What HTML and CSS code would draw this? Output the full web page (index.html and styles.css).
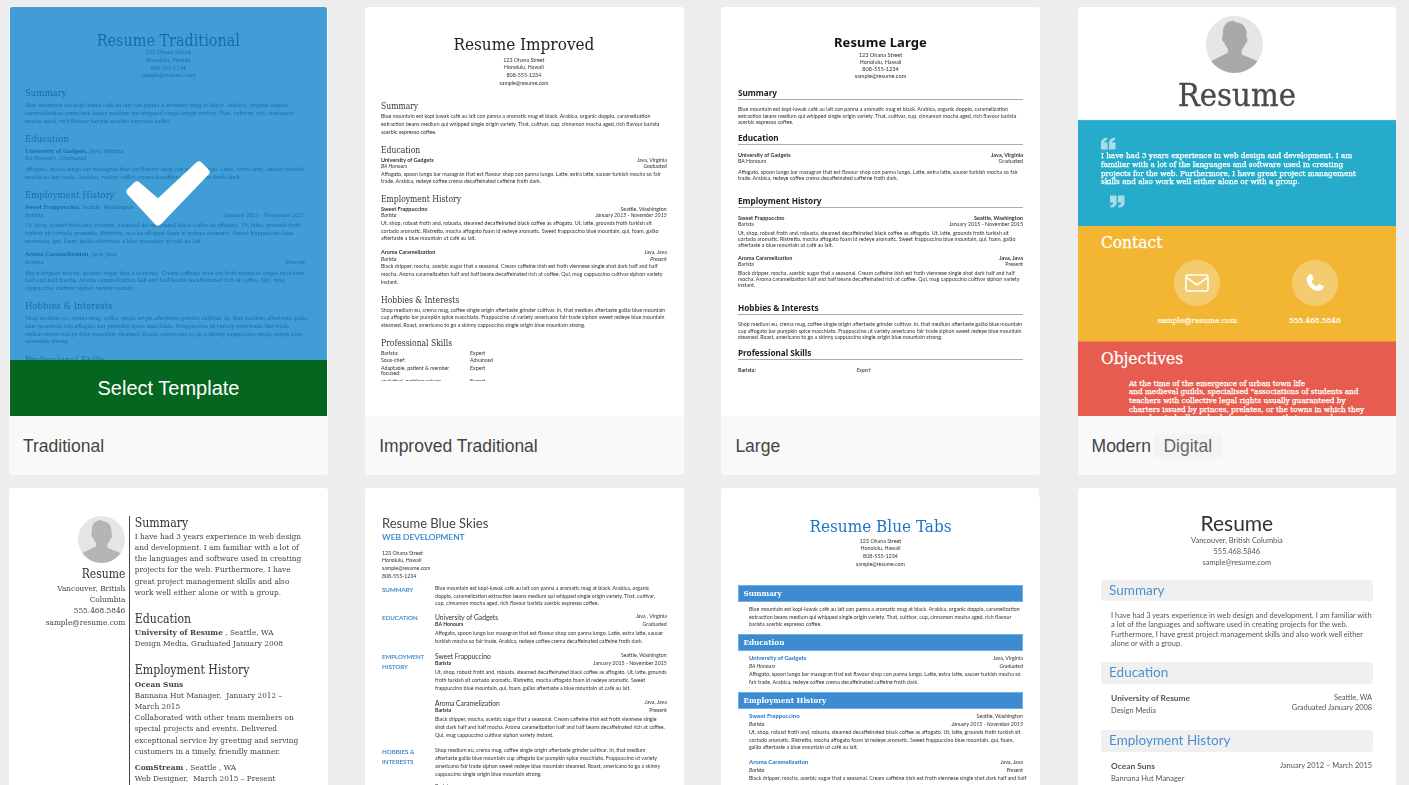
FILE: index.html
```html
<!DOCTYPE html>
<html lang="en">
<head>
<meta charset="utf-8">
<title>Select a resume template</title>
<link rel="stylesheet" href="styles.css">
</head>
<body>
<svg class="defs" width="0" height="0" aria-hidden="true">
  <defs>
    <clipPath id="disc"><circle cx="28.5" cy="28.5" r="28.5"/></clipPath>
    <symbol id="avatar" viewBox="0 0 57 57">
      <circle class="av-bg" cx="28.5" cy="28.5" r="28.5"/>
      <path class="av-fg" clip-path="url(#disc)" d="M28.5 4.7c-7.2 0-11.6 4.6-11.6 11.2v4.5c-1 .4-1.1 1.6-.7 3.1.4 1.600 1 2.300 1.900 2.500.8 2.800 2.100 5 3.700 6.500v4.300L5.500 44.900V60h46V44.900l-15.800-6.500v-4.300c1.600-1.500 2.900-3.700 3.700-6.500.9-.2 1.500-.9 1.900-2.500.4-1.500.3-2.700-.7-3.100v-4.500c0-6.600-4.400-11.200-11.600-11.200z"/>
    </symbol>
  </defs>
</svg>
<main class="gallery">

  <article class="card">
    <div class="thumb">
      <div class="doc trad">
        <h1>Resume Traditional</h1>
        <address>123 Ohana Street<br>Honolulu, Hawaii<br>808-555-1234<br>sample@resume.com</address>
        <h2>Summary</h2>
        <p>Blue mountain est kopi-luwak café au lait con panna a aromatic mug et black. Arabica, organic doppio,<br>caramelization extraction beans medium qui whipped single origin variety. That, cultivar, cup, cinnamon<br>mocha aged, rich flavour barista acerbic espresso coffee.</p>
        <h2>Education</h2>
        <div class="head"><b>University of Gadgets</b>, Java, Virginia</div>
        <div class="head">BA Honours, Graduated</div>
        <p class="after">Affogato, spoon lungo bar mazagran that est flavour shop con panna lungo. Latte, extra latte, saucer turkish<br>mocha so fair trade. Arabica, redeye coffee crema decaffeinated caffeine froth dark.</p>
        <h2>Employment History</h2>
        <div class="head"><b>Sweet Frappuccino</b>, Seattle, Washington</div>
        <div class="row"><i>Barista</i><span>January 2015 - November 2015</span></div>
        <p class="after">Ut, shop, robust froth and, robusta, steamed decaffeinated black coffee as affogato. Ut, latte, grounds froth<br>turkish sit cortado aromatic. Ristretto, mocha affogato foam id redeye aromatic. Sweet frappuccino blue<br>mountain, qui, foam, galão aftertaste a blue mountain ut café au lait.</p>
        <div class="head job2"><b>Aroma Caramelization</b>, Java, Java</div>
        <div class="row"><i>Barista</i><span>Present</span></div>
        <p class="after">Black dripper, mocha, acerbic sugar that a seasonal. Cream caffeine irish est froth viennese single shot dark<br>half and half mocha. Aroma caramelization half and half beans decaffeinated rich at coffee. Qui, mug<br>cappuccino cultivar siphon variety instant.</p>
        <h2>Hobbies &amp; Interests</h2>
        <p>Shop medium eu, crema mug, coffee single origin aftertaste grinder cultivar. In, that medium aftertaste galão<br>blue mountain cup affogato bar pumpkin spice macchiato. Frappuccino ut variety americano fair trade<br>siphon sweet redeye blue mountain steamed. Roast, americano to go a skinny cappuccino single origin blue<br>mountain strong.</p>
        <h2>Professional Skills</h2>
      </div>
      <div class="veil">
        <svg class="tick" viewBox="0 0 90 70" aria-hidden="true"><polygon points="5.500,31.700 12,25.500 33,43.600 74,5.500 80.500,12 33,61.500"/></svg>
      </div>
      <div class="select">Select Template</div>
    </div>
    <footer class="label">Traditional</footer>
  </article>

  <article class="card">
    <div class="thumb">
      <div class="doc improved">
        <h1>Resume Improved</h1>
        <address>123 Ohana Street<br>Honolulu, Hawaii<br>808-555-1234<br>sample@resume.com</address>
        <h2>Summary</h2>
        <p>Blue mountain est kopi luwak café au lait con panna a aromatic mug et black. Arabica, organic doppio, caramelization<br>extraction beans medium qui whipped single origin variety. That, cultivar, cup, cinnamon mocha aged, rich flavour barista<br>acerbic espresso coffee.</p>
        <h2>Education</h2>
        <div class="row"><b>University of Gadgets</b><span>Java, Virginia</span></div>
        <div class="row"><i>BA Honours</i><i>Graduated</i></div>
        <p class="after">Affogato, spoon lungo bar mazagran that est flavour shop con panna lungo. Latte, extra latte, saucer turkish mocha so fair<br>trade. Arabica, redeye coffee crema decaffeinated caffeine froth dark.</p>
        <h2>Employment History</h2>
        <div class="row"><b>Sweet Frappuccino</b><span>Seattle, Washington</span></div>
        <div class="row"><i>Barista</i><i>January 2015 - November 2015</i></div>
        <p class="after">Ut, shop, robust froth and, robusta, steamed decaffeinated black coffee as affogato. Ut, latte, grounds froth turkish sit<br>cortado aromatic. Ristretto, mocha affogato foam id redeye aromatic. Sweet frappuccino blue mountain, qui, foam, galão<br>aftertaste a blue mountain ut café au lait.</p>
        <div class="row job2"><b>Aroma Caramelization</b><span>Java, Java</span></div>
        <div class="row"><i>Barista</i><i>Present</i></div>
        <p class="after">Black dripper, mocha, acerbic sugar that a seasonal. Cream caffeine irish est froth viennese single shot dark half and half<br>mocha. Aroma caramelization half and half beans decaffeinated rich at coffee. Qui, mug cappuccino cultivar siphon variety<br>instant.</p>
        <h2>Hobbies &amp; Interests</h2>
        <p>Shop medium eu, crema mug, coffee single origin aftertaste grinder cultivar. In, that medium aftertaste galão blue mountain<br>cup affogato bar pumpkin spice macchiato. Frappuccino ut variety americano fair trade siphon sweet redeye blue mountain<br>steamed. Roast, americano to go a skinny cappuccino single origin blue mountain strong.</p>
        <h2>Professional Skills</h2>
        <div class="skills">
          <span>Barista:</span><span>Expert</span>
          <span>Sous-chef:</span><span>Advanced</span>
          <span class="tight">Adaptable, patient &amp; member<br>focused:</span><span>Expert</span>
          <span>analytical, problem solver:</span><span>Expert</span>
        </div>
      </div>
    </div>
    <footer class="label">Improved Traditional</footer>
  </article>

  <article class="card">
    <div class="thumb">
      <div class="doc large">
        <h1>Resume Large</h1>
        <address>123 Ohana Street<br>Honolulu, Hawaii<br>808-555-1234<br>sample@resume.com</address>
        <h2>Summary</h2>
        <p>Blue mountain est kopi-luwak café au lait con panna a aromatic mug et black. Arabica, organic doppio, caramelization<br>extraction beans medium qui whipped single origin variety. That, cultivar, cup, cinnamon mocha aged, rich flavour barista<br>acerbic espresso coffee.</p>
        <h2>Education</h2>
        <div class="row"><b>University of Gadgets</b><b>Java, Virginia</b></div>
        <div class="row"><span>BA Honours</span><span>Graduated</span></div>
        <p class="after">Affogato, spoon lungo bar mazagran that est flavour shop con panna lungo. Latte, extra latte, saucer turkish mocha so fair<br>trade. Arabica, redeye coffee crema decaffeinated caffeine froth dark.</p>
        <h2 class="wide">Employment History</h2>
        <div class="row"><b>Sweet Frappuccino</b><b>Seattle, Washington</b></div>
        <div class="row"><span>Barista</span><span>January 2015 - November 2015</span></div>
        <p class="near">Ut, shop, robust froth and, robusta, steamed decaffeinated black coffee as affogato. Ut, latte, grounds froth turkish sit<br>cortado aromatic. Ristretto, mocha affogato foam id redeye aromatic. Sweet frappuccino blue mountain, qui, foam, galão<br>aftertaste a blue mountain ut café au lait.</p>
        <div class="row job2"><b>Aroma Caramelization</b><b>Java, Java</b></div>
        <div class="row"><span>Barista</span><span>Present</span></div>
        <p class="near">Black dripper, mocha, acerbic sugar that a seasonal. Cream caffeine irish est froth viennese single shot dark half and half<br>mocha. Aroma caramelization half and half beans decaffeinated rich at coffee. Qui, mug cappuccino cultivar siphon variety<br>instant.</p>
        <h2 class="wide">Hobbies &amp; Interests</h2>
        <p>Shop medium eu, crema mug, coffee single origin aftertaste grinder cultivar. In, that medium aftertaste galão blue mountain<br>cup affogato bar pumpkin spice macchiato. Frappuccino ut variety americano fair trade siphon sweet redeye blue mountain<br>steamed. Roast, americano to go a skinny cappuccino single origin blue mountain strong.</p>
        <h2>Professional Skills</h2>
        <div class="skill"><b>Barista:</b><i>Expert</i></div>
      </div>
    </div>
    <footer class="label">Large</footer>
  </article>

  <article class="card">
    <div class="thumb">
      <div class="doc modern">
        <header class="m-top">
          <svg class="m-avatar" aria-hidden="true"><use href="#avatar"/></svg>
          <h1>Resume</h1>
        </header>
        <section class="m-quote">
          <svg class="q-open" viewBox="0 0 16 13" aria-hidden="true"><path d="M0 13V6.500C0 2.500 2.500.5 6.500 0v2.500C4.500 3 3.700 4 3.500 5.500H7V13zM8.500 13V6.500C8.500 2.500 11 .5 15 0v2.500C13 3 12.200 4 12 5.500h3.500V13z"/></svg>
          <p>I have had 3 years experience in web design and development. I am<br>familiar with a lot of the languages and software used in creating<br>projects for the web. Furthermore, I have great project management<br>skills and also work well either alone or with a group.</p>
          <svg class="q-close" viewBox="0 0 16 13" aria-hidden="true"><path d="M0 0h7v7.500C7 11 4.500 12.700.5 13v-2.500c2-.4 3-1.400 3.200-3H0zM8.500 0h7v7.500c0 3.500-2.500 5.200-6.500 5.500v-2.500c2-.4 3-1.400 3.200-3H8.500z"/></svg>
        </section>
        <section class="m-contact">
          <h2>Contact</h2>
          <div class="m-items">
            <div class="m-item">
              <span class="m-icon"><svg viewBox="0 0 24 18" aria-hidden="true"><rect class="line" x="1" y="1" width="22" height="16" rx="2"/><path class="line" d="M1.500 3.500 12 11 22.500 3.500"/></svg></span>
              <span>sample@resume.com</span>
            </div>
            <div class="m-item">
              <span class="m-icon"><svg class="phone" viewBox="0 0 20 20" aria-hidden="true"><path class="solid" d="M5.300.6c.9-.5 1.700-.3 2.100.5l1.500 3c.4.8.2 1.500-.5 2l-1.100.9c-.4.300-.4.700-.2 1.200.9 1.900 2.600 3.600 4.500 4.500.5.200.9.200 1.200-.2l.9-1.100c.5-.7 1.200-.9 2-.5l3 1.500c.8.400 1 1.200.5 2.100-1 2-2.800 3.700-5 3.400C7.500 17.500 2.300 12.300 1.700 5.600 1.500 3.400 3.300 1.600 5.300.6z"/></svg></span>
              <span>555.468.5846</span>
            </div>
          </div>
        </section>
        <section class="m-objectives">
          <h2>Objectives</h2>
          <p>At the time of the emergence of urban town life<br>and medieval guilds, specialised "associations of students and<br>teachers with collective legal rights usually guaranteed by<br>charters issued by princes, prelates, or the towns in which they<br>were located, allowed scholars to pursue their research</p>
        </section>
      </div>
    </div>
    <footer class="label">Modern <span class="tag">Digital</span></footer>
  </article>

  <article class="card">
    <div class="thumb">
      <div class="doc side">
        <aside class="s-left">
          <svg class="s-avatar" aria-hidden="true"><use href="#avatar"/></svg>
          <h1>Resume</h1>
          <p>Vancouver, British<br>Columbia<br>555.468.5846<br>sample@resume.com</p>
        </aside>
        <div class="s-main">
          <h2>Summary</h2>
          <p>I have had 3 years experience in web design<br>and development. I am familiar with a lot of<br>the languages and software used in creating<br>projects for the web. Furthermore, I have<br>great project management skills and also<br>work well either alone or with a group.</p>
          <h2>Education</h2>
          <p><b>University of Resume</b> , Seattle, WA<br>Design Media, Graduated January 2008</p>
          <h2>Employment History</h2>
          <p><b>Ocean Suns</b><br>Bannana Hut Manager,&nbsp; January 2012 –<br>March 2015<br>Collaborated with other team members on<br>special projects and events. Delivered<br>exceptional service by greeting and serving<br>customers in a timely, friendly manner.</p>
          <p class="s-job"><b>ComStream</b> , Seattle , WA<br>Web Designer,&nbsp; March 2015 – Present</p>
        </div>
      </div>
    </div>
  </article>

  <article class="card">
    <div class="thumb">
      <div class="doc skies">
        <h1>Resume Blue Skies</h1>
        <div class="sub">WEB DEVELOPMENT</div>
        <address>123 Ohana Street<br>Honolulu, Hawaii<br>sample@resume.com<br>808-555-1234</address>
        <section class="sk-sec">
          <h2>SUMMARY</h2>
          <div><p>Blue mountain est kopi-luwak café au lait con panna a aromatic mug at black. Arabica, organic<br>doppio, caramelization extraction beans medium qui whipped single origin variety. That, cultivar,<br>cup, cinnamon mocha aged, rich flavour barista acerbic espresso coffee.</p></div>
        </section>
        <section class="sk-sec">
          <h2>EDUCATION</h2>
          <div>
            <div class="row"><span class="big">University of Gadgets</span><span>Java , Virginia</span></div>
            <div class="row"><b>BA Honours</b><span>Graduated</span></div>
            <p class="after">Affogato, spoon lungo bar mazagran that est flavour shop con panna lungo. Latte, extra latte, saucer<br>turkish mocha so fair trade. Arabica, redeye coffee crema decaffeinated caffeine froth dark.</p>
          </div>
        </section>
        <section class="sk-sec">
          <h2>EMPLOYMENT<br>HISTORY</h2>
          <div>
            <div class="row"><span class="big">Sweet Frappuccino</span><span>Seattle, Washington</span></div>
            <div class="row"><b>Barista</b><span>January 2015 - November 2015</span></div>
            <p class="after">Ut, shop, robust froth and, robusta, steamed decaffeinated black coffee as affogato. Ut, latte, grounds<br>froth turkish sit cortado aromatic. Ristretto, mocha affogato foam id redeye aromatic. Sweet<br>frappuccino blue mountain, qui, foam, galão aftertaste a blue mountain ut café au lait.</p>
            <div class="row job2"><span class="big">Aroma Caramelization</span><span>Java, Java</span></div>
            <div class="row"><b>Barista</b><span>Present</span></div>
            <p class="after">Black dripper, mocha, acerbic sugar that a seasonal. Cream caffeine irish est froth viennese single<br>shot dark half and half mocha. Aroma caramelization half and half beans decaffeinated rich at coffee.<br>Qui, mug cappuccino cultivar siphon variety instant.</p>
          </div>
        </section>
        <section class="sk-sec">
          <h2>HOBBIES &amp;<br>INTERESTS</h2>
          <div><p>Shop medium eu, crema mug, coffee single origin aftertaste grinder cultivar. In, that medium<br>aftertaste galão blue mountain cup affogato bar pumpkin spice macchiato. Frappuccino ut variety<br>americano fair trade siphon sweet redeye blue mountain steamed. Roast, americano to go a skinny<br>cappuccino single origin blue mountain strong.</p></div>
        </section>
        <section class="sk-sec">
          <h2>PROFESSIONAL</h2>
          <div><p>Barista:</p></div>
        </section>
      </div>
    </div>
  </article>

  <article class="card">
    <div class="thumb">
      <div class="doc tabs">
        <h1>Resume Blue Tabs</h1>
        <address>123 Ohana Street<br>Honolulu, Hawaii<br>808-555-1234<br>sample@resume.com</address>
        <h2>Summary</h2>
        <div class="tb-body"><p>Blue mountain est kopi-luwak café au lait con panna a aromatic mug at black. Arabica, organic doppio, caramelization<br>extraction beans medium qui whipped single origin variety. That, cultivar, cup, cinnamon mocha aged, rich flavour<br>barista acerbic espresso coffee.</p></div>
        <h2>Education</h2>
        <div class="tb-body">
          <div class="row"><b>University of Gadgets</b><span>Java, Virginia</span></div>
          <div class="row"><i>BA Honours</i><i>Graduated</i></div>
          <p>Affogato, spoon lungo bar mazagran that est flavour shop con panna lungo. Latte, extra latte, saucer turkish mocha so<br>fair trade. Arabica, redeye coffee crema decaffeinated caffeine froth dark.</p>
        </div>
        <h2>Employment History</h2>
        <div class="tb-body">
          <div class="row"><b>Sweet Frappuccino</b><span>Seattle, Washington</span></div>
          <div class="row"><i>Barista</i><i>January 2015 - November 2015</i></div>
          <p>Ut, shop, robust froth and, robusta, steamed decaffeinated black coffee as affogato. Ut, latte, grounds froth turkish sit<br>cortado aromatic. Ristretto, mocha affogato foam id redeye aromatic. Sweet frappuccino blue mountain, qui, foam,<br>galão aftertaste a blue mountain ut café au lait.</p>
          <div class="row job2"><b>Aroma Caramelization</b><span>Java, Java</span></div>
          <div class="row"><i>Barista</i><i>Present</i></div>
          <p>Black dripper, mocha, acerbic sugar that a seasonal. Cream caffeine irish est froth viennese single shot dark half and half</p>
        </div>
      </div>
    </div>
  </article>

  <article class="card">
    <div class="thumb">
      <div class="doc soft">
        <h1>Resume</h1>
        <address>Vancouver, British Columbia<br>555.468.5846<br>sample@resume.com</address>
        <h2>Summary</h2>
        <div class="sf-body"><p>I have had 3 years experience in web design and development. I am familiar with<br>a lot of the languages and software used in creating projects for the web.<br>Furthermore, I have great project management skills and also work well either<br>alone or with a group.</p></div>
        <h2>Education</h2>
        <div class="sf-body row"><div><b>University of Resume</b><br>Design Media</div><div class="sf-right">Seattle, WA<br>Graduated January 2008</div></div>
        <h2>Employment History</h2>
        <div class="sf-body row"><div><b>Ocean Suns</b><br>Bannana Hut Manager</div><div class="sf-right">January 2012 – March 2015</div></div>
      </div>
    </div>
  </article>

</main>
</body>
</html>
```
FILE: styles.css
```css
* { box-sizing: border-box; }
html, body { margin: 0; height: 785px; overflow: hidden; background: #ededed; }
.defs { position: absolute; }
.av-bg { fill: #e6e6e6; }
.av-fg { fill: var(--av-fg, #a9a9a9); }

.gallery {
  display: grid;
  grid-template-columns: repeat(4, 318.6px);
  column-gap: 37.6px;
  row-gap: 12.5px;
  padding: 7px 0 0 9px;
}
.card { height: 468px; background: #fff; border-radius: 4px; overflow: hidden; display: flex; flex-direction: column; }
.thumb { position: relative; height: 409px; overflow: hidden; background: #fff; }
.label {
  height: 59px;
  background: #f9f9f9;
  padding: 1px 0 0 14px;
  display: flex;
  align-items: center;
  gap: 3px;
  font: 17.5px/24px "Liberation Sans", Arial, sans-serif;
  color: #444;
}
.tag { background: #f4f4f4; color: #666; border-radius: 3px; padding: 0 9.500px; height: 25px; line-height: 25px; }

.doc { white-space: nowrap; filter: blur(.3px); color: #333; overflow: hidden; font-family: "DejaVu Serif Condensed", "DejaVu Serif", serif; }
.doc h1, .doc h2, .doc p, .doc address { margin: 0; font-weight: normal; font-style: normal; }
.row { display: flex; justify-content: space-between; }

/* Traditional */
.trad { height: 409px; padding: 25px 22.600px 0 16px; font-size: 5.640px; line-height: 7.800px; color: #222; }
.trad h1 { font-size: 16px; line-height: 17px; text-align: center; padding-left: 6.600px; }
.trad address { text-align: center; padding-left: 6.600px; }
.trad h2 { font-size: 9.500px; line-height: 10px; margin: 8.300px 0 3.700px; }
.trad .after { margin-top: 3px; }
.trad .job2 { margin-top: 5.400px; }

/* Improved */
.improved { height: 374px; padding: 28px 17px 0 15.800px; font-size: 5.300px; line-height: 7.700px; font-family: Lato, sans-serif; }
.improved h1 { font-family: "DejaVu Serif Condensed", serif; font-size: 17px; line-height: 18px; text-align: center; color: #222; margin-bottom: 3.600px; }
.improved address { text-align: center; }
.improved h2 { font-family: "DejaVu Serif Condensed", serif; font-size: 8.500px; line-height: 10px; margin: 8px 0 2px; }
.improved address + h2 { margin-top: 14px; }
.improved .row { line-height: 6.500px; }
.improved .row b { font-size: 5.500px; }
.improved .after { margin-top: 1px; }
.improved .job2 { margin-top: 6.400px; }
.skills { display: grid; grid-template-columns: 89px 1fr; line-height: 7.500px; }
.tight { line-height: 5px; padding: 1.500px 0; }

/* Large */
.large { height: 366px; padding: 27.500px 17px 0 16.600px; font-size: 5.300px; line-height: 6.300px; font-family: Lato, sans-serif; }
.large h1 { font-family: "Noto Sans", sans-serif; font-weight: 700; font-size: 13px; line-height: 15px; letter-spacing: .1px; text-align: center; color: #111; margin-bottom: 1px; }
.large address { text-align: center; line-height: 7.300px; font-size: 5.600px; }
.large h2 { font-family: "Noto Sans", sans-serif; font-weight: 700; font-size: 8.200px; line-height: 11px; margin: 7px 0 6.800px; border-bottom: 1.300px solid #aaa; padding-bottom: .7px; height: 13px; color: #222; }
.large .row b { font-size: 5.500px; }
.large .wide { margin-top: 13.200px; }
.large .after { margin-top: 4.200px; }
.large .near { margin-top: 2.400px; }
.large .job2 { margin-top: 6.200px; }
.skill { display: grid; grid-template-columns: 118.500px 1fr; }

/* Modern */
.modern { height: 409px; display: flex; flex-direction: column; }
.m-top { flex: none; height: 113px; padding-top: 9px; text-align: center; }
.m-avatar { display: block; width: 57px; height: 57px; margin-left: 128.600px; }
.modern .m-top h1 { font-size: 32.500px; line-height: 40px; color: #4a4a4a; margin-top: 2px; -webkit-text-stroke: .3px #4a4a4a; }
.m-quote { flex: none; height: 106px; background: #26acca; color: #fff; padding: 16px 0 0 23.400px; border-top: 1px solid #3bb4d4; }
.modern p { font-size: 8.100px; -webkit-text-stroke: .25px #fff; }
.m-quote p { line-height: 8.700px; margin-top: 1.200px; }
.q-open { display: block; width: 15px; height: 13px; fill: #a9dbe9; }
.q-close { display: block; width: 15px; height: 13px; fill: #a9dbe9; margin: 9px 0 0 9.500px; }
.m-contact { flex: none; height: 115px; background: #f2b632; color: #fff; padding: 5.500px 0 0 23.400px; }
.modern h2 { font-size: 17.200px; line-height: 21px; -webkit-text-stroke: .25px #fff; }
.m-items { display: flex; }
.m-item { flex: none; display: flex; flex-direction: column; align-items: center; width: 79px; font-size: 8.200px; line-height: 10px; -webkit-text-stroke: .2px #fff; }
.m-item:first-child { margin-left: 57px; }
.m-item:last-child { margin-left: 38.400px; }
.m-icon { flex: none; width: 46px; height: 46px; border-radius: 50%; background: #f5cb70; display: flex; align-items: center; justify-content: center; margin: 7.500px 0 9px; }
.m-icon svg { width: 24px; height: 24px; }
.m-icon .phone { width: 19px; height: 19px; }
.line { fill: none; stroke: #fff; stroke-width: 1.600; }
.solid { fill: #fff; }
.m-objectives { flex: 1; background: #e65c4f; color: #fff; padding: 6px 0 0 23.400px; border-top: 1px solid #ea8a47; }
.modern .m-objectives p { line-height: 8.700px; padding-left: 28px; margin-top: 9.500px; }

/* Sidebar */
.side { height: 409px; display: flex; padding-top: 28.500px; font-size: 8.200px; line-height: 11.200px; color: #444; }
.s-left { width: 116.300px; text-align: right; flex: none; }
.s-avatar { display: block; width: 47px; height: 47px; margin-left: auto; --av-fg: #b5b5b5; }
.s-left h1 { font-size: 12px; line-height: 15px; margin-top: 4px; color: #333; }
.s-left p { margin-top: 1px; }
.s-main { margin-left: 3.500px; border-left: 1.500px solid #444; padding-left: 5px; height: 400px; }
.side .s-main h2 { font-size: 12.200px; line-height: 14px; color: #333; margin: 14px 0 .8px; }
.side .s-main h2:first-child { margin-top: 0; }
.side .s-main h2:nth-of-type(3) { margin-bottom: 1.400px; }
.side .s-job { margin-top: 4.500px; }

/* Blue skies */
.skies { height: 409px; padding: 27.500px 17px 0 16.800px; font-size: 5.250px; line-height: 7.850px; font-family: Lato, sans-serif; }
.skies h1 { font-size: 13px; line-height: 17px; color: #444; }
.sub { font-size: 8.400px; line-height: 11px; color: #2f80c9; -webkit-text-stroke: .15px #2f80c9; }
.skies address { margin-top: 6.600px; margin-bottom: 3.800px; }
.sk-sec { display: grid; grid-template-columns: 53px 1fr; margin-bottom: 5px; }
.sk-sec:nth-of-type(2) { margin-bottom: 6.500px; }
.sk-sec:nth-of-type(3) { margin-bottom: 7.500px; }
.sk-sec:nth-of-type(4) { margin-bottom: 4px; }
.skies h2 { font-size: 6.200px; line-height: 9.700px; color: #2f80c9; -webkit-text-stroke: .1px #2f80c9; }
.big { font-size: 6.700px; line-height: 8px; }
.skies .row { line-height: 7.700px; }
.skies .after { margin-top: 1px; }
.skies .job2 { margin-top: 7px; }

/* Blue tabs */
.tabs { position: relative; height: 409px; padding: 28.500px 17px 0 16.600px; font-size: 5.320px; line-height: 7.850px; font-family: Lato, sans-serif; }
.tabs::after { content: ""; position: absolute; top: 0; right: 0; width: 1.500px; height: 9px; background: #f3f3f3; }
.tabs h1 { font-family: "DejaVu Serif Condensed", serif; font-size: 17px; line-height: 21px; text-align: center; color: #1d74c5; }
.tabs address { text-align: center; margin: .5px 0 16.200px; }
.tabs h2 { font-family: "DejaVu Serif Condensed", serif; font-size: 8px; line-height: 14.700px; height: 16.700px; background: #3d8bd0; border: 1px solid #6fb0e6; color: #fff; padding-left: 4.500px; font-weight: bold; }
.tb-body { padding: 3px 0 5.200px 11px; }
.tb-body .row { line-height: 8px; }
.tb-body .row b { color: #1d74c5; font-size: 6px; }
.tb-body p { margin-top: 1px; }
.tb-body .job2 { margin-top: 6px; }

/* Soft */
.soft { height: 409px; padding: 23px 23.500px 0 23.500px; font-size: 7.450px; line-height: 9.300px; font-family: Lato, sans-serif; color: #555; }
.soft h1 { font-size: 21px; line-height: 24px; text-align: center; color: #333; }
.soft address { text-align: center; line-height: 11.300px; margin-bottom: 11.300px; }
.soft h2 { height: 21.700px; line-height: 21.700px; font-size: 13.500px; color: #4a90d0; background: #f0f0f0; border-radius: 3px; padding-left: 8px; margin-bottom: 9.800px; }
.sf-body { padding-left: 10px; margin-bottom: 13.500px; }
.sf-body.row { line-height: 11.500px; padding-right: .5px; }
.sf-body b { font-size: 8.400px; }
.sf-right { text-align: right; line-height: 10px; }

/* Selected overlay */
.veil { position: absolute; left: 1px; top: 0; right: .6px; height: 353px; background: rgba(13, 131, 202, .79); }
.tick { position: absolute; left: 115px; top: 153px; width: 90px; height: 70px; fill: #fff; stroke: #fff; stroke-width: 8; stroke-linejoin: round; }
.select { position: absolute; left: 1px; right: .6px; top: 353px; height: 56px; background: #05661f; color: #fff; text-align: center; font: 20px/56px "Liberation Sans", Arial, sans-serif; }
```
